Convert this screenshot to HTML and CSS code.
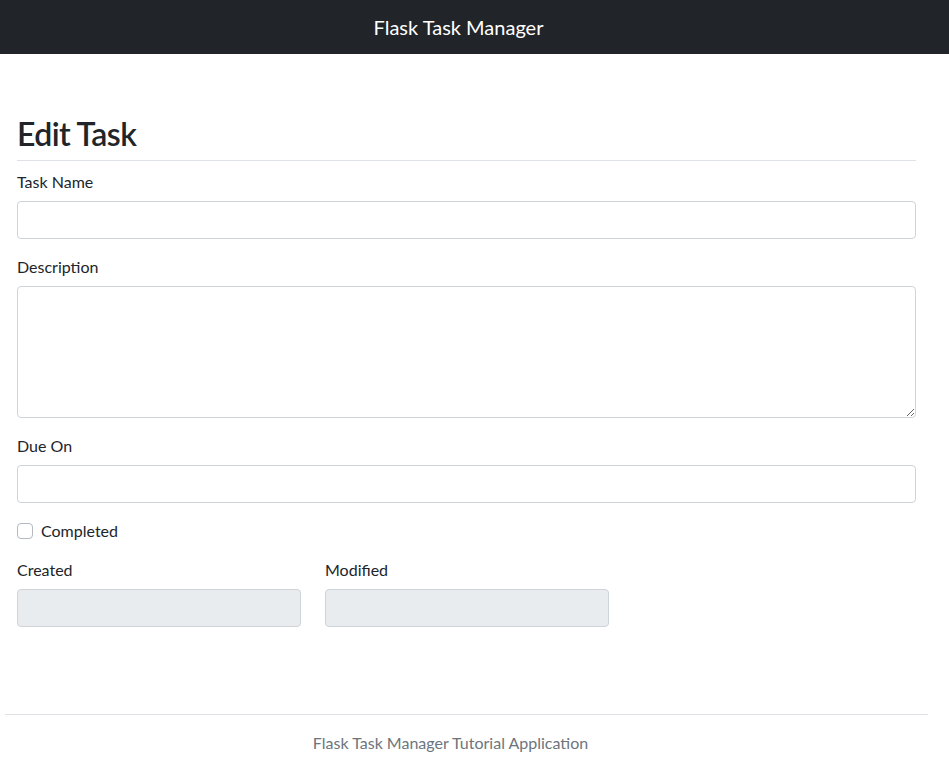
FILE: index.html
```html
<!DOCTYPE html>
<html lang="en">
  <head>
    <meta charset="UTF-8" />
    <meta name="viewport" content="width=device-width, initial-scale=1.0" />
    <title>Flask Task Manager</title>
    <link rel="stylesheet" href="styles.css">
  </head>
  <body>
    <nav class="navbar">
      <span class="brand">Flask Task Manager</span>
    </nav>

    <main class="container">
      <h2>Edit Task</h2>
      <hr class="title-rule" />
      <form class="task-form">
        <div class="form-group">
          <label for="name">Task Name</label>
          <input type="text" id="name" class="form-control" />
        </div>
        <div class="form-group">
          <label for="description">Description</label>
          <textarea id="description" class="form-control textarea"></textarea>
        </div>
        <div class="form-group">
          <label for="due">Due On</label>
          <input type="text" id="due" class="form-control" />
        </div>
        <div class="form-group check">
          <input type="checkbox" id="completed" />
          <label for="completed">Completed</label>
        </div>
        <div class="dates">
          <div class="form-group">
            <label for="created">Created</label>
            <input type="text" id="created" class="form-control" disabled />
          </div>
          <div class="form-group">
            <label for="modified">Modified</label>
            <input type="text" id="modified" class="form-control" disabled />
          </div>
        </div>
      </form>
    </main>

    <footer class="footer">
      <p>Flask Task Manager Tutorial Application</p>
    </footer>
  </body>
</html>
```

FILE: styles.css
```css
body {
  margin: 0;
  padding-right: 16px;
  font-family: 'Lato', 'Noto Sans', sans-serif;
  font-size: 16px;
  line-height: 23px;
  color: #212529;
  background: #fff;
}
.navbar {
  background-color: #212529;
  height: 54px;
  display: flex;
  align-items: center;
  justify-content: center;
  margin-right: -16px;
  padding-right: 32px;
}
.brand {
  color: #fff;
  font-size: 20px;
  line-height: 30px;
}
.container {
  padding: 61px 17px 0;
}
h2 {
  font-size: 32px;
  font-weight: 600;
  line-height: 38px;
  letter-spacing: -0.6px;
  margin: 0;
}
.title-rule {
  border: 0;
  border-top: 1px solid #dee2e6;
  margin: 7px 0 9px;
}
.form-group {
  margin-bottom: 16px;
}
.form-group label {
  display: block;
  margin-bottom: 8px;
}
.form-control {
  display: block;
  box-sizing: border-box;
  width: 100%;
  height: 38px;
  padding: 6px 12px;
  border: 1px solid #ced4da;
  border-radius: 4px;
  background: #fff;
  font: inherit;
  color: #495057;
}
.form-control:disabled {
  background: #e9ecef;
}
.textarea {
  height: 132px;
  resize: vertical;
}
.check {
  display: flex;
  align-items: center;
  gap: 8px;
}
.check label {
  margin: 0;
}
.check input {
  appearance: none;
  width: 16px;
  height: 16px;
  margin: 0;
  border: 1px solid #b4b9be;
  border-radius: 4px;
  background: #fff;
}
.dates {
  display: grid;
  grid-template-columns: 284px 284px;
  gap: 24px;
}
.dates .form-group {
  margin-bottom: 0;
}
.footer {
  margin: 87px 5px 0;
  border-top: 1px solid #dee2e6;
  text-align: center;
  color: #6c757d;
}
.footer p {
  margin: 16px 0 0;
  line-height: 24px;
  padding-right: 32px;
}
```
